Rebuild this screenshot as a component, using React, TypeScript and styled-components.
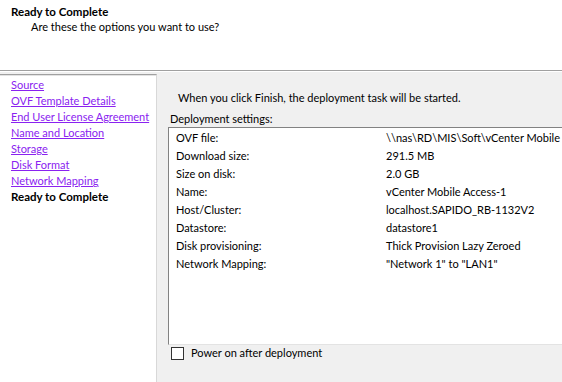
import React from 'react';
import styled, { createGlobalStyle } from 'styled-components';

const GlobalStyle = createGlobalStyle`
  html, body {
    margin: 0;
    padding: 0;
    background: #f0f0f0;
  }
  body {
    font-family: Lato, "Noto Sans", sans-serif;
    font-size: 11px;
    color: #000;
  }
`;

const Wizard = styled.div`
  width: 562px;
  height: 382px;
  display: flex;
  flex-direction: column;
  overflow: hidden;
  background: #f0f0f0;
`;

const Header = styled.header`
  height: 71px;
  flex-shrink: 0;
  background: #fff;
  border-bottom: 1px solid #a0a0a0;
  box-shadow: 0 1px 0 #fff;
  box-sizing: border-box;
  padding: 4px 0 0 11px;
`;

const Title = styled.div`
  font-weight: bold;
  font-size: 11.5px;
  line-height: 16px;
`;

const Subtitle = styled.div`
  line-height: 14px;
  padding-left: 20px;
`;

const Body = styled.div`
  flex: 1;
  display: flex;
  min-height: 0;
`;

const Nav = styled.nav`
  width: 157px;
  margin-top: 3px;
  background: #fff;
  border-top: 1px solid #a0a0a0;
  border-right: 1px solid #d8d8d8;
  box-shadow: inset 0 1px 0 #e3e3e3;
  padding: 2px 0 0 11px;
  box-sizing: border-box;
  display: flex;
  flex-direction: column;
  white-space: nowrap;
`;

const NavLink = styled.a`
  color: #8a22f0;
  text-decoration: underline;
  line-height: 16px;
  cursor: pointer;
`;

const NavCurrent = styled.span`
  font-weight: bold;
  font-size: 11.5px;
  line-height: 16px;
`;

const Content = styled.main`
  flex: 1;
  min-width: 0;
  padding: 19px 0 0 11px;
  overflow: hidden;
`;

const Intro = styled.div`
  line-height: 16px;
  margin-left: 10px;
  margin-bottom: 5px;
`;

const SectionLabel = styled.div`
  line-height: 16px;
  margin-left: 2px;
`;

const SettingsBox = styled.div`
  width: 400px;
  height: 218px;
  box-sizing: border-box;
  background: #fff;
  border-top: 1px solid #828282;
  border-left: 1px solid #828282;
  border-bottom: 1px solid #e3e3e3;
  padding: 1px 0 0 7px;
`;

const Row = styled.div`
  display: grid;
  grid-template-columns: 210px 1fr;
  line-height: 18px;
  white-space: nowrap;
`;

const CheckRow = styled.label`
  display: flex;
  align-items: center;
  gap: 7px;
  margin: 0 0 0 3px;
  line-height: 16px;
`;

const CheckBox = styled.span`
  width: 11px;
  height: 11px;
  border: 1px solid #333;
  background: #fff;
  flex-shrink: 0;
`;

const steps = [
  'Source',
  'OVF Template Details',
  'End User License Agreement',
  'Name and Location',
  'Storage',
  'Disk Format',
  'Network Mapping',
];

const settings: [string, string][] = [
  ['OVF file:', '\\\\nas\\RD\\MIS\\Soft\\vCenter Mobile'],
  ['Download size:', '291.5 MB'],
  ['Size on disk:', '2.0 GB'],
  ['Name:', 'vCenter Mobile Access-1'],
  ['Host/Cluster:', 'localhost.SAPIDO_RB-1132V2'],
  ['Datastore:', 'datastore1'],
  ['Disk provisioning:', 'Thick Provision Lazy Zeroed'],
  ['Network Mapping:', '"Network 1" to "LAN1"'],
];

export default function App() {
  return (
    <Wizard>
      <GlobalStyle />
      <Header>
        <Title>Ready to Complete</Title>
        <Subtitle>Are these the options you want to use?</Subtitle>
      </Header>
      <Body>
        <Nav>
          {steps.map((s) => (
            <NavLink key={s}>{s}</NavLink>
          ))}
          <NavCurrent>Ready to Complete</NavCurrent>
        </Nav>
        <Content>
          <Intro>When you click Finish, the deployment task will be started.</Intro>
          <SectionLabel>Deployment settings:</SectionLabel>
          <SettingsBox>
            {settings.map(([k, v]) => (
              <Row key={k}>
                <span>{k}</span>
                <span>{v}</span>
              </Row>
            ))}
          </SettingsBox>
          <CheckRow>
            <CheckBox />
            Power on after deployment
          </CheckRow>
        </Content>
      </Body>
    </Wizard>
  );
}
